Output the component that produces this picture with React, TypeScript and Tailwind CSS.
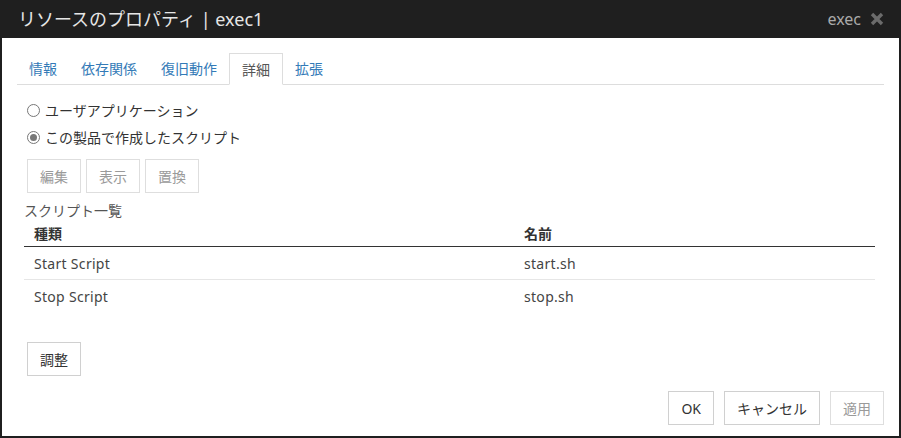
import React from 'react';

const tabs = ['情報', '依存関係', '復旧動作', '詳細', '拡張'];

const scripts = [
  { kind: 'Start Script', name: 'start.sh' },
  { kind: 'Stop Script', name: 'stop.sh' },
];

function Btn({ label, disabled, className = '' }: { label: string; disabled?: boolean; className?: string }) {
  return (
    <button
      className={`h-[34px] border bg-white px-3 text-[14px] ${
        disabled ? 'border-[#dedede] text-[#9a9a9a]' : 'border-[#d0d0d0] text-[#333]'
      } ${className}`}
    >
      {label}
    </button>
  );
}

export default function App() {
  const [selected, setSelected] = React.useState(1);

  return (
    <div
      className="flex h-[438px] w-[901px] flex-col border-x-2 border-b-2 border-[#1f1f1f] bg-white"
      style={{ fontFamily: '"Noto Sans", "Noto Sans CJK JP", sans-serif' }}
    >
      <div className="flex h-[38px] shrink-0 items-center justify-between bg-[#1f1f1f] pl-4 pr-[15px]">
        <span className="text-[18px] text-[#e6e6e6]">リソースのプロパティ | exec1</span>
        <div className="flex items-center gap-[9px]">
          <span className="text-[16px] text-[#aaaaaa]">exec</span>
          <svg width="14" height="14" viewBox="0 0 14 14">
            <path d="M2 2 L12 12 M12 2 L2 12" stroke="#6b6b6b" strokeWidth="3.4" strokeLinecap="butt" />
          </svg>
        </div>
      </div>

      <div className="flex flex-1 flex-col px-[15px] pt-[15px]">
        <div className="flex h-[32px] items-end border-b border-[#dddddd]">
          {tabs.map((t) => (
            <div
              key={t}
              className={`flex h-[32px] items-center px-[12px] text-[14px] ${
                t === '詳細'
                  ? '-mb-px border border-[#dddddd] border-b-white bg-white px-[11px] text-[#555]'
                  : 'text-[#337ab7]'
              }`}
            >
              {t}
            </div>
          ))}
        </div>

        <div className="mt-[16px] flex flex-col gap-[9px] pl-[10px] text-[14px] text-[#333]">
          {['ユーザアプリケーション', 'この製品で作成したスクリプト'].map((label, i) => (
            <label key={label} className="flex h-[18px] items-center gap-[5px]" onClick={() => setSelected(i)}>
              <span className="flex h-[13px] w-[13px] items-center justify-center rounded-full border border-[#777] bg-white">
                {selected === i && <span className="h-[7px] w-[7px] rounded-full bg-[#777]" />}
              </span>
              {label}
            </label>
          ))}
        </div>

        <div className="mt-[13px] flex gap-[5px] pl-[10px]">
          <Btn label="編集" disabled />
          <Btn label="表示" disabled />
          <Btn label="置換" disabled />
        </div>

        <div className="mt-[7px] pl-[7px] text-[14px] text-[#555]">スクリプト一覧</div>

        <div className="ml-[7px] mr-[9px] text-[14px] text-[#444]">
          <div className="flex h-[26px] items-center border-b border-[#333] px-[10px] font-semibold text-[#333]">
            <span className="w-[490px]">種類</span>
            <span>名前</span>
          </div>
          {scripts.map((s, i) => (
            <div
              key={s.kind}
              className={`flex h-[33px] items-center px-[10px] ${i === 0 ? 'border-b border-[#e6e6e6]' : ''}`}
            >
              <span className="w-[490px] tracking-[0.3px]">{s.kind}</span>
              <span className="tracking-[0.3px]">{s.name}</span>
            </div>
          ))}
        </div>

        <div className="mt-[29px] pl-[10px]">
          <Btn label="調整" />
        </div>

        <div className="mt-[15px] flex justify-end gap-[10px]">
          <Btn label="OK" />
          <Btn label="キャンセル" />
          <Btn label="適用" disabled />
        </div>
      </div>
    </div>
  );
}
